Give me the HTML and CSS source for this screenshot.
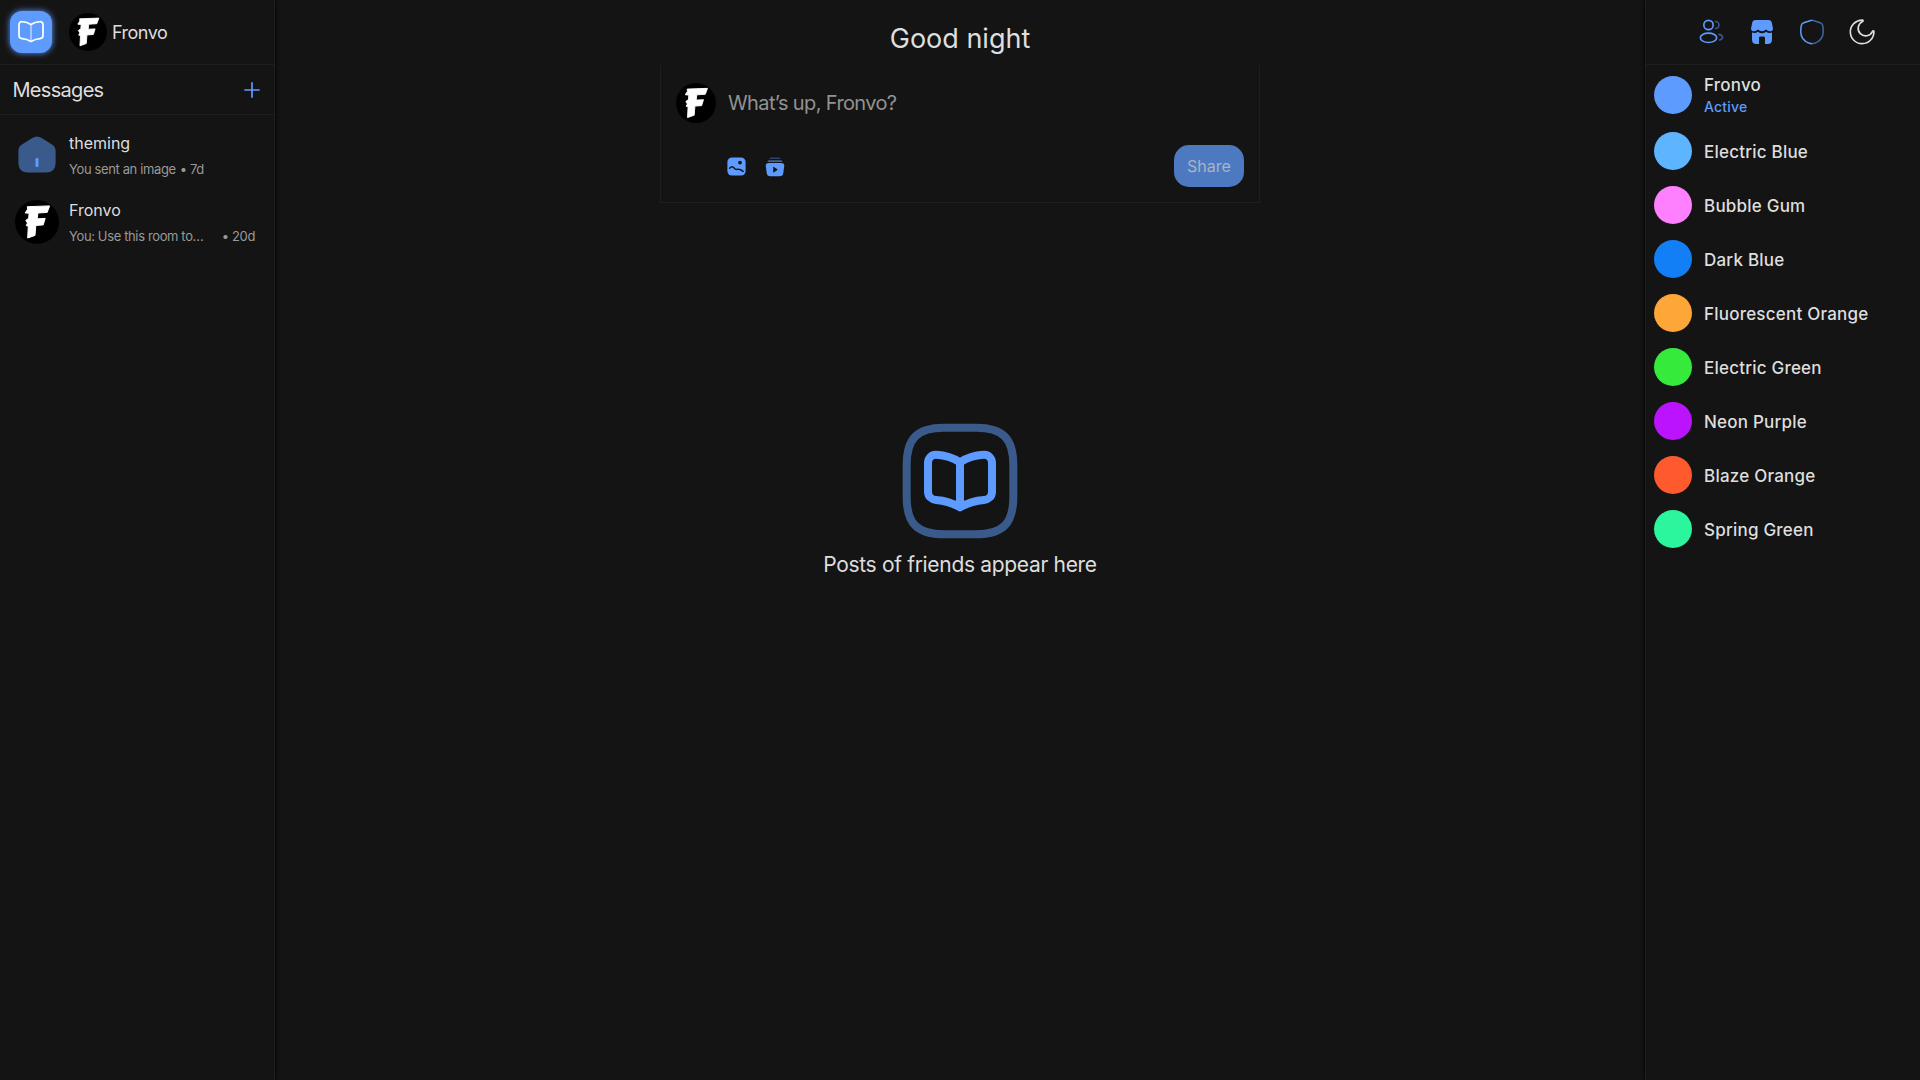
FILE: index.html
```html
<!DOCTYPE html>
<html lang="en">
<head>
<meta charset="utf-8">
<title>Fronvo</title>
<link rel="stylesheet" href="styles.css">
</head>
<body>
<svg class="defs" width="0" height="0" aria-hidden="true">
  <symbol id="avatar" viewBox="0 0 44 44">
    <circle cx="22" cy="22" r="22" fill="#000"/>
    <path d="M12.3 6.7 34.6 5.9 32.2 12.4 22.9 13 22.2 18.8 30.2 18.4 28.2 24.9 20.8 25.4 20 35.4 12.7 38 13.3 26.2 11.2 25.6 12.5 23 10.8 20.4 13.7 18.2 14.1 13.3 10.2 12.9 12.6 9.2Z" fill="#fff" stroke="#fff" stroke-width="1" stroke-linejoin="round"/>
  </symbol>
</svg>
<div class="app">
  <aside class="left">
    <header class="topbar">
      <button class="home">
        <svg viewBox="1.5 1.75 21 21" width="42" height="42" fill="none" stroke="#fff" stroke-width=".85" stroke-linejoin="round"><path opacity=".5" d="M12 8.5V17"/><path d="M12 8.5C10.9 7.8 9.2 7.2 7.6 7.1 6.7 7 6 7.7 6 8.6V14c0 .9.7 1.5 1.5 1.55C9 15.65 10.6 16.1 12 16.95 13.4 16.1 15 15.65 16.5 15.55 17.3 15.5 18 14.9 18 14V8.6C18 7.7 17.3 7 16.4 7.1 14.8 7.2 13.1 7.8 12 8.5Z"/></svg>
      </button>
      <svg class="me" width="38" height="38"><use href="#avatar"/></svg>
      <span class="me-name">Fronvo</span>
    </header>
    <div class="section"><h2>Messages</h2>
      <svg width="16" height="16" viewBox="0 0 16 16" stroke="#5e9bff" stroke-width="1.7"><path d="M8 .3V15.7M.3 8H15.7"/></svg>
    </div>
    <ul class="chats">
      <li>
        <svg width="44" height="44" viewBox="0 0 44 44"><path fill="#3b5a8c" d="M17.3 5.1Q22 1.9 26.7 5.1L37 11.6Q40.6 14 40.6 18V30Q40.6 39.5 31 39.5H13Q3.4 39.5 3.4 30V18Q3.4 14 7 11.6Z"/><rect x="20.5" y="25" width="3" height="9" rx="1.2" fill="#5e9bff"/></svg>
        <div class="chat"><b>theming</b><p><span>You sent an image</span><span class="ago">• 7d</span></p></div>
      </li>
      <li>
        <svg width="44" height="44"><use href="#avatar"/></svg>
        <div class="chat"><b>Fronvo</b><p><span class="clip">You: Use this room to…</span><span class="ago">• 20d</span></p></div>
      </li>
    </ul>
  </aside>

  <main class="feed">
    <h1>Good night</h1>
    <section class="composer">
      <div class="prompt"><svg width="40" height="40"><use href="#avatar"/></svg><span>What’s up, Fronvo?</span></div>
      <div class="actions">
        <svg width="19" height="19" viewBox="0 0 19 19"><rect x=".4" y=".4" width="18.2" height="18.2" rx="4.5" fill="#5e9bff"/><circle cx="13" cy="5.6" r="1.9" fill="#141414"/><path d="M2.6 11.2C4.4 9.1 5.8 9.3 7.3 11.2 8.8 13.1 9.3 12.4 11 12.2 13 12 14.2 12.7 16.2 14.4" fill="none" stroke="#141414" stroke-width="1.4" stroke-linecap="round"/></svg>
        <svg width="20" height="20" viewBox="0 0 20 20" fill="#5e9bff"><path opacity=".35" d="M5.3.5H14.7L15.6 2H4.4Z"/><path opacity=".6" d="M3.4 3.2H16.6L17.6 4.9H2.4Z"/><path d="M4 6H16Q19.6 6 19.2 9.2L18.3 16Q17.8 19.3 14.8 19.3H5.2Q2.2 19.3 1.7 16L.8 9.2Q.4 6 4 6Z"/><path fill="#141414" d="M8.2 10.2Q8.2 9.6 8.8 9.9L12.4 12.2Q12.9 12.6 12.4 13L8.8 15.4Q8.2 15.7 8.2 15Z"/></svg>
        <button class="share">Share</button>
      </div>
    </section>
    <section class="empty">
      <svg viewBox="0 0 24 24" width="128" height="128" fill="none" stroke="#5e9bff" stroke-width="1.5" stroke-linejoin="round"><path stroke="#3b5a8c" d="M22 15V9C22 4 20 2 15 2H9C4 2 2 4 2 9V15C2 20 4 22 9 22H15C20 22 22 20 22 15Z"/><path d="M12 8.5V17M12 8.5C10.9 7.8 9.2 7.2 7.6 7.1 6.7 7 6 7.7 6 8.6V14c0 .9.7 1.5 1.5 1.55C9 15.65 10.6 16.1 12 16.95 13.4 16.1 15 15.65 16.5 15.55 17.3 15.5 18 14.9 18 14V8.6C18 7.7 17.3 7 16.4 7.1 14.8 7.2 13.1 7.8 12 8.5Z"/></svg>
      <p>Posts of friends appear here</p>
    </section>
  </main>

  <aside class="right">
    <nav class="topbar tools">
      <svg width="28" height="28" viewBox="0 0 24 24" fill="none" stroke="#5e9bff" stroke-width="1.4" stroke-linecap="round"><circle cx="9" cy="6" r="4"/><ellipse cx="9" cy="17" rx="7" ry="4"/><path opacity=".5" d="M15 9a3 3 0 1 0 0-6M18 14c1.754.385 3 1.359 3 2.5 0 1.03-1.014 1.923-2.5 2.37"/></svg>
      <svg width="28" height="28" viewBox="0 0 28 28" fill="#5e9bff"><path d="M7.5 2H20.5Q23.3 2 23.8 4.7L25 10.4Q25 13.2 22 13.2 19.6 13.2 18 11.4 16.4 13.2 14 13.2 11.6 13.2 10 11.4 8.4 13.2 6 13.2 3 13.2 3 10.4L4.2 4.7Q4.7 2 7.5 2Z"/><path d="M4 14.6Q7.5 15.5 10 13.7 12 15.2 14 15.2 16 15.2 18 13.7 20.5 15.5 24 14.6V21.5Q24 26 19.5 26H17V20Q17 18.6 15.6 18.6H12.4Q11 18.6 11 20V26H8.5Q4 26 4 21.5Z"/></svg>
      <svg width="28" height="28" viewBox="0 0 24 24" fill="none" stroke="#5e9bff" stroke-width="1.3"><path d="M12 2C11.2 2 10.4 2.3 8.8 2.8L8.3 3C5.3 4 3.8 4.5 3.4 5.1 2.4 6.4 2.4 10 2.4 12 2.4 17.6 6.6 20.4 9.3 21.5 10.4 21.8 11.2 22 12 22"/><path opacity=".6" d="M12 2C12.8 2 13.6 2.3 15.2 2.8L15.7 3C18.7 4 20.2 4.5 20.6 5.1 21.6 6.4 21.6 10 21.6 12 21.6 17.6 17.4 20.4 14.7 21.5 13.6 21.8 12.8 22 12 22"/></svg>
      <svg width="28" height="28" viewBox="0 0 24 24" fill="none" stroke="#dedede" stroke-width="1.4" stroke-linejoin="round"><path d="M12.4 1.8A10.1 10.1 0 1 0 22.2 11.6C22.1 10.9 21.3 10.9 20.9 11.6A6.4 6.4 0 1 1 12.4 3.1C13.1 2.7 13.1 1.9 12.4 1.8Z"/></svg>
    </nav>
    <ul class="themes">
      <li class="active"><i class="c1"></i><span>Fronvo<small>Active</small></span></li>
      <li><i class="c2"></i><span>Electric Blue</span></li>
      <li><i class="c3"></i><span>Bubble Gum</span></li>
      <li><i class="c4"></i><span>Dark Blue</span></li>
      <li><i class="c5"></i><span>Fluorescent Orange</span></li>
      <li><i class="c6"></i><span>Electric Green</span></li>
      <li><i class="c7"></i><span>Neon Purple</span></li>
      <li><i class="c8"></i><span>Blaze Orange</span></li>
      <li><i class="c9"></i><span>Spring Green</span></li>
    </ul>
  </aside>
</div>
</body>
</html>
```
FILE: styles.css
```css
* { box-sizing: border-box; margin: 0; padding: 0; }
body { background: #141414; color: #dedede; font-family: Inter, "Noto Sans", sans-serif; height: 100vh; overflow: hidden; }
.defs { display: none; }
ul { list-style: none; }
button { border: 0; font: inherit; }
svg { display: block; flex: none; }
.app { display: grid; grid-template-columns: 275px 1fr 275px; height: 100vh; }

.left { border-right: 1px solid #1e1e1e; box-shadow: 0 0 5px #000; }
.right { border-left: 1px solid #1e1e1e; box-shadow: 0 0 5px #000; }
.topbar { display: flex; align-items: center; height: 65px; border-bottom: 1px solid #1e1e1e; }

.left .topbar { padding-left: 10px; }
.home { width: 42px; height: 42px; border-radius: 12px; background: #5e9bff; box-shadow: 0 0 6px #5e9bff; display: grid; place-items: center; }
.me { margin: 0 5px 0 17px; }
.me-name { font-size: 18px; letter-spacing: -.5px; font-weight: 400; }
.section { display: flex; align-items: center; justify-content: space-between; height: 50px; padding: 0 14px 0 12.5px; border-bottom: 1px solid #1e1e1e; }
.section h2 { font-size: 20px; font-weight: 400; letter-spacing: -.7px; }

.chats { padding-top: 17px; }
.chats li { display: flex; height: 67px; gap: 10px; padding: 0 19px 0 15px; }
.chats li > svg { margin-top: 1px; }
.chat { flex: 1; min-width: 0; }
.chat b { display: block; font-size: 16px; font-weight: 400; line-height: 22px; }
.chat p { display: flex; gap: 4px; margin-top: 6px; font-size: 13px; line-height: 18px; letter-spacing: -.37px; color: #999; white-space: nowrap; }
.clip { flex: 1; }

.feed { display: flex; flex-direction: column; align-items: center; }
.feed h1 { height: 65px; padding-top: 20px; font-size: 27px; line-height: 38px; font-weight: 400; }
.composer { width: 600px; height: 138px; border: 1px solid #1e1e1e; border-top: 0; padding: 18px 15px 15px; display: flex; flex-direction: column; justify-content: space-between; }
.prompt { display: flex; align-items: center; gap: 12px; font-size: 20px; color: #929292; font-weight: 400; letter-spacing: -.62px; }
.actions { display: flex; align-items: center; gap: 19.5px; padding-left: 50.5px; }
.actions svg { margin-top: 1px; }
.share { margin-left: auto; width: 70px; height: 42px; border-radius: 15px; background: #4c79c0; color: #a9b4c6; font-size: 16px; }
.empty { margin-top: 213.5px; display: flex; flex-direction: column; align-items: center; gap: 5px; font-size: 21px; line-height: 30px; font-weight: 400; letter-spacing: -.32px; }

.tools { justify-content: center; gap: 22px; padding-left: 8px; }
.themes { padding: 2px 0 0 8px; }
.themes li { display: flex; align-items: center; gap: 12px; height: 54px; font-size: 17px; font-weight: 500; letter-spacing: .22px; }
.themes span { padding-top: 1px; }
.themes .active { height: 57px; line-height: 21px; align-items: flex-start; padding-top: 9px; }
.themes .active span { padding: 0; margin-top: -1px; }
.themes small { display: block; font-size: 14px; color: #5e9bff; }
.themes i { width: 38px; height: 38px; border-radius: 50%; }
.c1 { background: #5e9bff; }
.c2 { background: #5eb5ff; }
.c3 { background: #ff80ff; }
.c4 { background: #127ff6; }
.c5 { background: #ffa638; }
.c6 { background: #35ea3a; }
.c7 { background: #bc13fe; }
.c8 { background: #ff5a2e; }
.c9 { background: #2bf59d; }
```
